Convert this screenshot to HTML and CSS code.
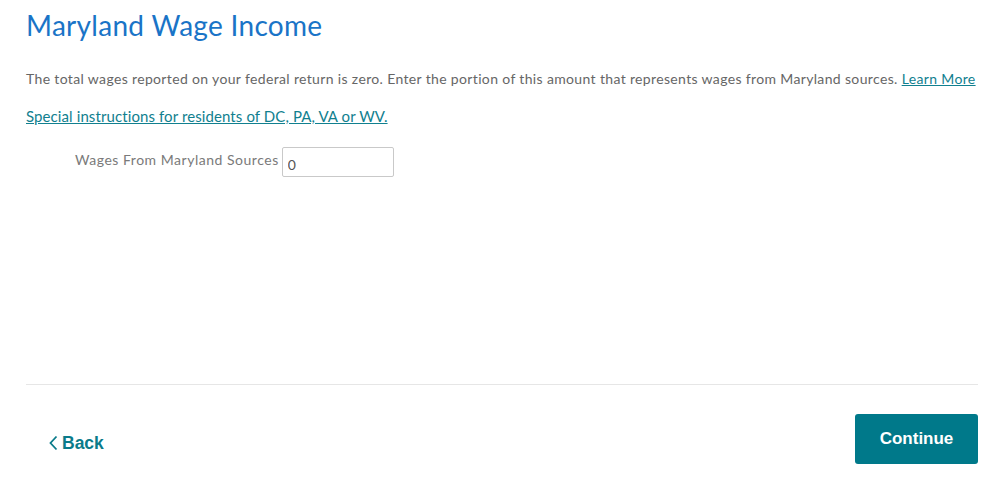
FILE: index.html
```html
<!DOCTYPE html>
<html lang="en">
<head>
  <meta charset="UTF-8">
  <title>Maryland Wage Income</title>
  <link rel="stylesheet" href="styles.css">
</head>
<body>
  <div class="page">
    <h1 class="title">Maryland Wage Income</h1>
    <p class="intro">The total wages reported on your federal return is zero. Enter the portion of this amount that represents wages from Maryland sources. <a href="#" class="link">Learn More</a></p>
    <p class="special"><a href="#" class="link">Special instructions for residents of DC, PA, VA or WV.</a></p>
    <div class="field">
      <label class="field-label" for="wages">Wages From Maryland Sources</label>
      <input type="text" id="wages" class="field-input" value="0">
    </div>
  </div>
  <div class="footer">
    <a href="#" class="back">
      <svg width="11" height="18" viewBox="0 0 11 18"><path d="M8.5 2.5 L2.5 9 L8.5 15.5" fill="none" stroke="#0a7b8a" stroke-width="1.8"/></svg>
      Back
    </a>
    <button class="continue">Continue</button>
  </div>
</body>
</html>
```

FILE: styles.css
```css
body {
  margin: 0;
  font-family: Lato, "Open Sans", sans-serif;
  color: #555;
  background: #fff;
}
.page {
  padding: 0 22px 0 26px;
  height: 384px;
  box-sizing: border-box;
}
.title {
  margin: 0;
  padding-top: 8px;
  font-size: 28px;
  font-weight: 400;
  color: #1a74c7;
  letter-spacing: 0.3px;
}
.intro {
  margin: 28px 0 0;
  font-size: 14px;
  letter-spacing: 0.35px;
  color: #666;
  white-space: nowrap;
}
.link {
  color: #11808f;
  text-decoration: underline;
}
.special {
  margin: 20px 0 0;
  font-size: 15px;
  letter-spacing: 0.1px;
}
.field {
  display: flex;
  align-items: center;
  margin-top: 22px;
  padding-left: 49px;
}
.field-label {
  font-size: 14px;
  letter-spacing: 0.52px;
  color: #7a7a7a;
  margin-right: 3px;
  margin-top: -6px;
}
.field-input {
  width: 112px;
  height: 30px;
  box-sizing: border-box;
  border: 1px solid #c9c9c9;
  border-radius: 2px;
  font-family: inherit;
  font-size: 14px;
  padding: 5px 5px 0;
  color: #555;
}
.footer {
  margin: 0 21px 0 26px;
  border-top: 1px solid #e6e6e6;
  display: flex;
  justify-content: space-between;
  align-items: center;
  padding: 29px 0 0 22px;
}
.back {
  display: flex;
  align-items: center;
  gap: 3px;
  font-family: "Liberation Sans", Arial, sans-serif;
  font-weight: bold;
  font-size: 17.5px;
  color: #0a7b8a;
  text-decoration: none;
  margin-top: 8px;
}
.continue {
  width: 123px;
  height: 50px;
  background: #00798a;
  color: #fff;
  border: none;
  border-radius: 3px;
  font-family: "Liberation Sans", Arial, sans-serif;
  font-weight: bold;
  font-size: 17px;
}
```
